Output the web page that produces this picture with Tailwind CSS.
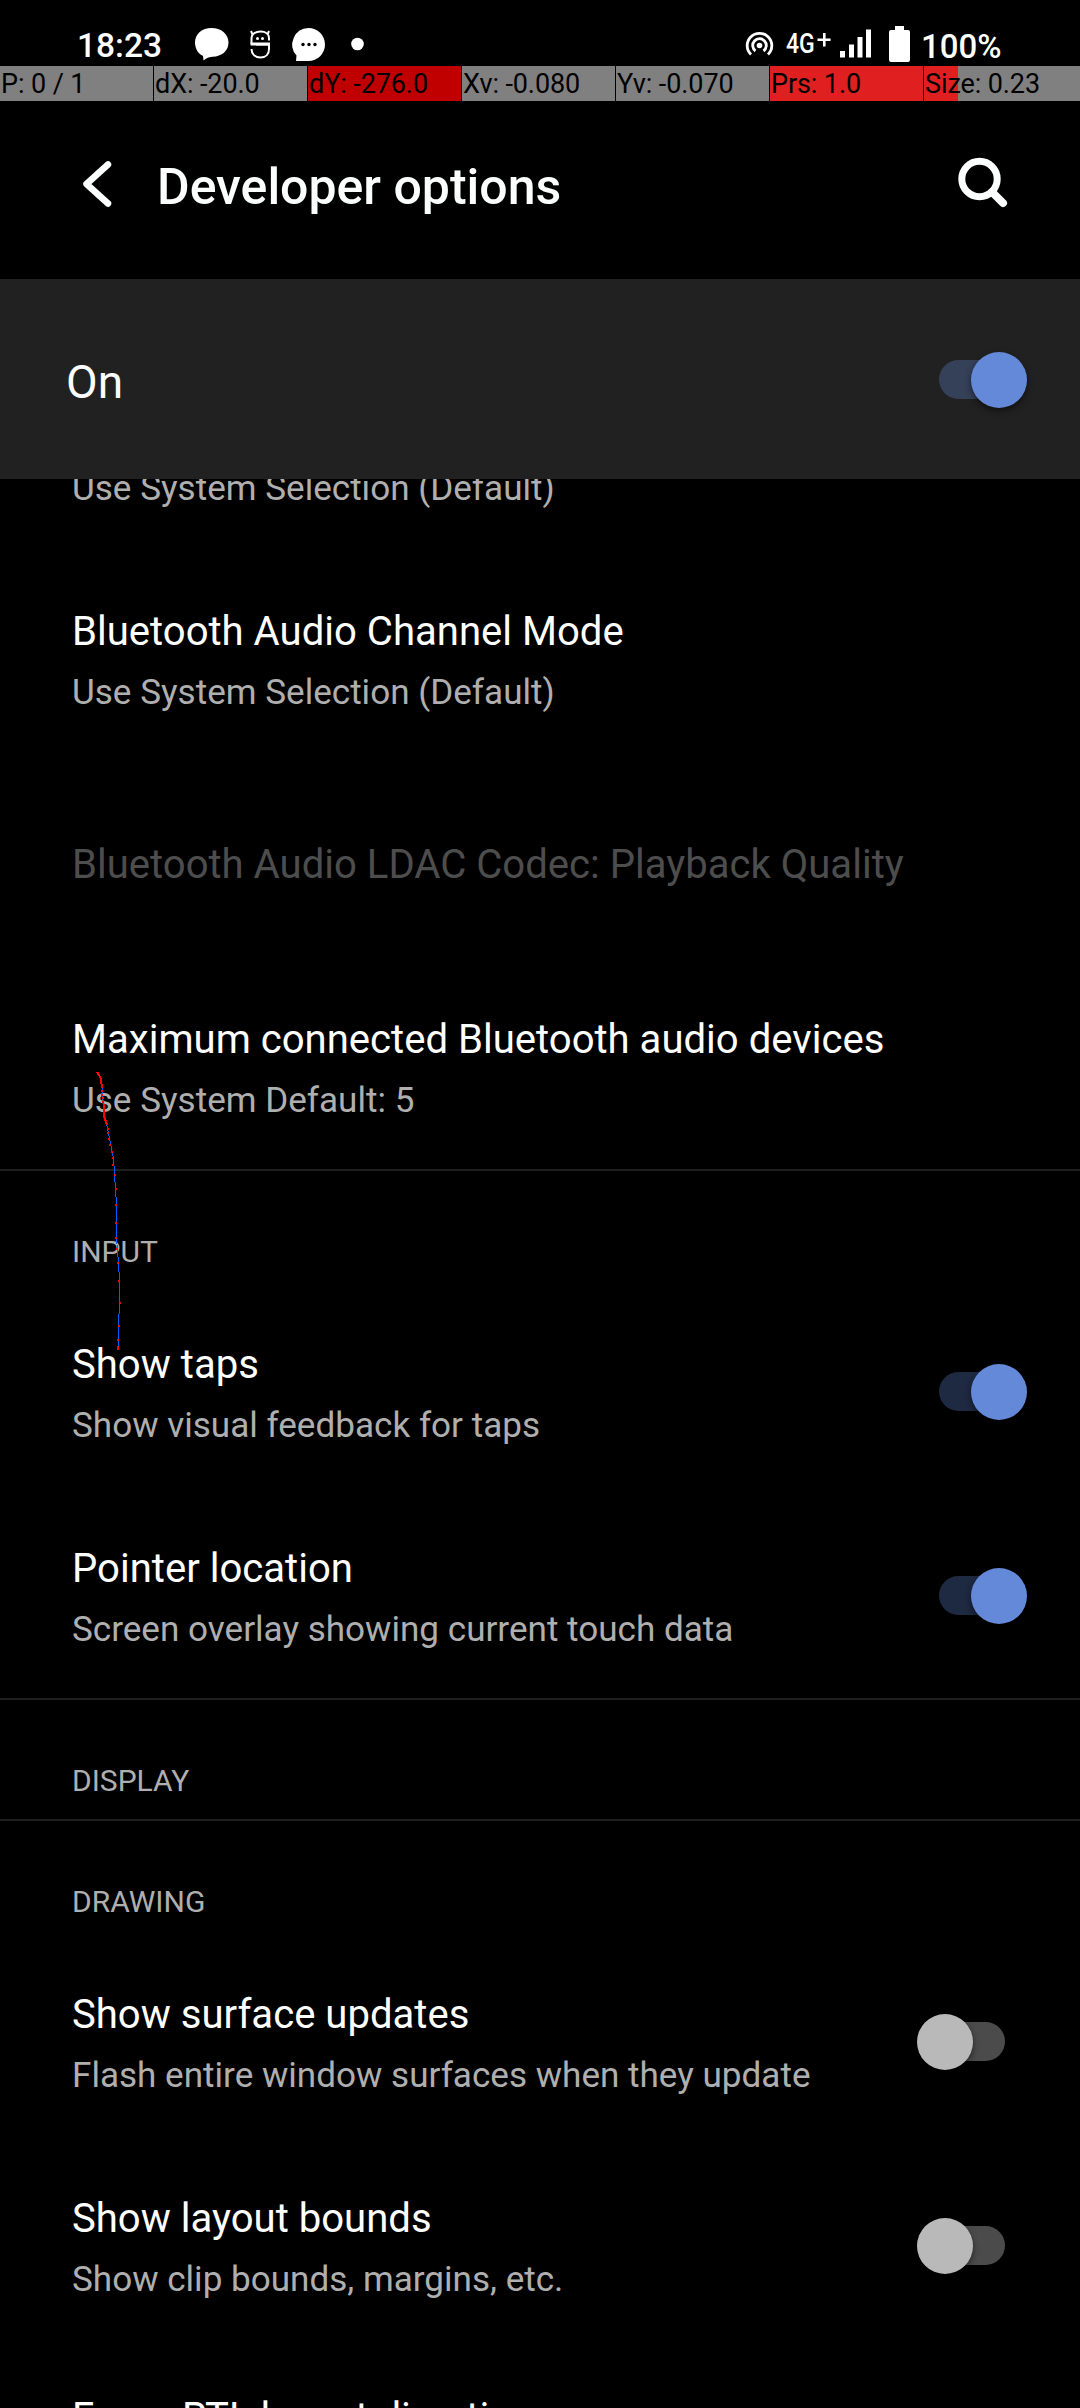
<!DOCTYPE html>
<html lang="en">
<head>
<meta charset="utf-8">
<title>Developer options</title>
<script src="https://cdn.jsdelivr.net/npm/@tailwindcss/browser@4"></script>
</head>
<body class="bg-black text-white font-[Roboto,sans-serif]">
<div class="relative w-[1080px] h-[2408px] overflow-hidden flex flex-col">
  <header class="h-[66px] shrink-0 flex">
    <span class="ml-[77px] mt-[26px] w-[113px] text-[33.500px] leading-[40px] font-medium whitespace-nowrap">18:23</span>
    <svg class="w-[190px] h-[66px]" viewBox="190 0 190 66" fill="#fff">
      <path d="M211.500 28c-9.500 0-16.500 6-16.500 14.500 0 6.500 3.500 11.500 8 13.500l.5 4.500c3-2 4.500-3.500 9-3.700 9.500-.3 16-6 16-14.300C228.500 34 221 28 211.500 28z"/>
      <g fill="none" stroke="#fff" stroke-width="2">
        <path d="M269 40.500v-2.500c0-4-3.500-6.500-8.500-6.500s-9 2.500-9 6.500v6M252.500 34.500l-1.500-3.500M267.500 34.500l1.500-3.500M251.500 49c0 5 3.500 8.500 9 8.500s8.500-3.500 8.500-8.500v-4.500h-13"/>
        <path stroke-width="3" d="M250.500 44h19.500"/>
      </g>
      <circle cx="257.500" cy="38.500" r="1.500"/><circle cx="262.500" cy="38.500" r="1.500"/>
      <path d="M308.500 28a16.500 16.500 0 0 1 0 33h-12.500l.5-5.500A16.500 16.500 0 0 1 308.500 28z"/>
      <g fill="#000"><circle cx="303" cy="44.500" r="1.700"/><circle cx="309" cy="44.500" r="1.700"/><circle cx="315" cy="44.500" r="1.700"/></g>
      <circle cx="357.500" cy="44" r="6.300"/>
    </svg>
    <svg class="ml-[359px] w-[40px] h-[66px]" viewBox="740 0 40 66" fill="none" stroke="#fff" stroke-width="2.800">
      <circle cx="760.500" cy="45.500" r="2.800" fill="#fff" stroke="none"/>
      <path d="M756.500 51a6.800 6.800 0 1 1 8 0M752 54.500a12.300 12.300 0 1 1 17 0"/>
    </svg>
    <span class="ml-[7px] mt-[25px] w-[30px] text-[28px] leading-[38px] font-medium whitespace-nowrap"><span class="inline-block origin-left scale-x-[0.82]">4G</span></span>
    <svg class="w-[100px] h-[66px]" viewBox="817 0 100 66" fill="#fff">
      <path d="M824 33h2.600v5.500h5v2.500h-5v5.500h-2.600v-5.500h-5.500v-2.500h5.500z"/>
      <path d="M841 51h5v6.500h-5zM850 44.500h5v13h-5zM858.500 37h5v20.500h-5zM867 29.500h5v28h-5z"/>
      <path d="M896 26h9v4h4a2 2 0 0 1 2 2v28a2 2 0 0 1-2 2h-17a2 2 0 0 1-2-2v-28a2 2 0 0 1 2-2h4z"/>
    </svg>
    <span class="ml-[5px] mt-[26px] text-[33px] leading-[41px] font-medium whitespace-nowrap">100%</span>
  </header>

  <div class="h-[35px] shrink-0 grid grid-cols-[153px_153px_153px_153px_153px_153px_156px] gap-px text-black text-[27px] tracking-[-0.1px] leading-[36px] whitespace-nowrap">
    <div class="bg-[#808080] pl-px h-[35px]">P: 0 / 1</div>
    <div class="bg-[#808080] pl-px h-[35px]">dX: -20.0</div>
    <div class="bg-[#c00000] pl-px h-[35px]">dY: -276.0</div>
    <div class="bg-[#808080] pl-px h-[35px]">Xv: -0.080</div>
    <div class="bg-[#808080] pl-px h-[35px]">Yv: -0.070</div>
    <div class="bg-[#e02020] pl-px h-[35px]">Prs: 1.0</div>
    <div class="bg-linear-to-r from-[#e02020] from-[34px] to-[#808080] to-[34px] pl-px h-[35px]">Size: 0.23</div>
  </div>

  <div class="h-[178px] shrink-0 flex">
    <svg class="ml-[78px] mt-[55px] w-[40px] h-[56px]" viewBox="78 156 40 56" fill="none" stroke="#fcfdfd" stroke-width="6.500" stroke-linecap="round" stroke-linejoin="round"><path d="M108 164.500L86.500 184L108 203.500"/></svg>
    <h1 class="ml-[39px] mt-[56px] text-[50px] leading-[60px] font-medium text-[#fcfdfd]">Developer options</h1>
    <svg class="ml-auto mr-[68px] mt-[51px] w-[60px] h-[60px]" viewBox="952 152 60 60" fill="none" stroke="#fcfdfd" stroke-width="7"><circle cx="979.500" cy="179" r="17.700"/><path stroke-width="8" stroke-linecap="round" d="M992 192L1003 203"/></svg>
  </div>

  <div class="h-[200px] shrink-0 bg-[#212121] flex items-start pl-[66px] pr-[53px]">
    <span class="mt-[73px] text-[46px] leading-[60px] text-[#fcfdfd]">On</span>
    <div class="ml-auto mt-[73px] w-[88px] h-[56px] relative"><div class="absolute left-0 top-2 w-[66px] h-[39px] rounded-full bg-[#6489d9]/30"></div><div class="absolute right-0 top-0 size-[56px] rounded-full bg-[#6489d9] shadow-[0_3px_6px_rgba(0,0,0,.5)]"></div></div>
  </div>

  <main class="flex flex-col text-[40.1px] leading-[48px] whitespace-nowrap">
    <section class="h-[692px] shrink-0 overflow-hidden border-b-2 border-[#1f1f1f] pl-[72px]">
      <p class="-mt-[12px] text-[35.1px] leading-[42px] text-[#afafaf]">Use System Selection (Default)</p>
      <h2 class="mt-[99px]">Bluetooth Audio Channel Mode</h2>
      <p class="mt-[15px] text-[35.1px] leading-[42px] text-[#afafaf]">Use System Selection (Default)</p>
      <h2 class="mt-[128px] text-[#4d4d4d]">Bluetooth Audio LDAC Codec: Playback Quality</h2>
      <h2 class="mt-[127px]">Maximum connected Bluetooth audio devices</h2>
      <p class="mt-[15px] text-[35.1px] leading-[42px] text-[#afafaf]">Use System Default: 5</p>
    </section>
    <section class="h-[529px] shrink-0 border-b-2 border-[#1f1f1f] pl-[72px] pr-[53px]">
      <h3 class="mt-[63px] text-[30px] leading-[36px] text-[#afafaf]">INPUT</h3>
      <div class="mt-[71px] h-[106px] flex">
        <div class="flex flex-col gap-[15px]"><h2>Show taps</h2><p class="text-[35.1px] leading-[42px] text-[#afafaf]">Show visual feedback for taps</p></div>
        <div class="ml-auto mt-[23px] w-[88px] h-[56px] relative"><div class="absolute left-0 top-2 w-[66px] h-[39px] rounded-full bg-[#6489d9]/30"></div><div class="absolute right-0 top-0 size-[56px] rounded-full bg-[#6489d9] shadow-[0_3px_6px_rgba(0,0,0,.5)]"></div></div>
      </div>
      <div class="mt-[98px] h-[106px] flex">
        <div class="flex flex-col gap-[15px]"><h2>Pointer location</h2><p class="text-[35.1px] leading-[42px] text-[#afafaf]">Screen overlay showing current touch data</p></div>
        <div class="ml-auto mt-[23px] w-[88px] h-[56px] relative"><div class="absolute left-0 top-2 w-[66px] h-[39px] rounded-full bg-[#6489d9]/30"></div><div class="absolute right-0 top-0 size-[56px] rounded-full bg-[#6489d9] shadow-[0_3px_6px_rgba(0,0,0,.5)]"></div></div>
      </div>
    </section>
    <section class="h-[121px] shrink-0 border-b-2 border-[#1f1f1f] pl-[72px]">
      <h3 class="mt-[63px] text-[30px] leading-[36px] text-[#afafaf]">DISPLAY</h3>
    </section>
    <section class="pl-[72px] pr-[75px]">
      <h3 class="mt-[63px] text-[30px] leading-[36px] text-[#afafaf]">DRAWING</h3>
      <div class="mt-[71px] h-[106px] flex">
        <div class="flex flex-col gap-[15px]"><h2>Show surface updates</h2><p class="text-[35.1px] leading-[42px] text-[#afafaf]">Flash entire window surfaces when they update</p></div>
        <div class="ml-auto mt-[23px] w-[88px] h-[56px] relative"><div class="absolute right-0 top-2 w-[66px] h-[39px] rounded-full bg-[#4b4b4b]"></div><div class="absolute left-0 top-0 size-[56px] rounded-full bg-[#b9b9b9] shadow-[0_3px_6px_rgba(0,0,0,.5)]"></div></div>
      </div>
      <div class="mt-[98px] h-[106px] flex">
        <div class="flex flex-col gap-[15px]"><h2>Show layout bounds</h2><p class="text-[35.1px] leading-[42px] text-[#afafaf]">Show clip bounds, margins, etc.</p></div>
        <div class="ml-auto mt-[23px] w-[88px] h-[56px] relative"><div class="absolute right-0 top-2 w-[66px] h-[39px] rounded-full bg-[#4b4b4b]"></div><div class="absolute left-0 top-0 size-[56px] rounded-full bg-[#b9b9b9] shadow-[0_3px_6px_rgba(0,0,0,.5)]"></div></div>
      </div>
      <h2 class="mt-[93px]">Force RTL layout direction</h2>
    </section>
  </main>

  <!-- touch trail -->
  <svg class="absolute left-[90px] top-[1065px] w-[40px] h-[290px]" viewBox="90 1065 40 290" fill="none" shape-rendering="crispEdges">
    <path stroke="#0060ff" d="M97.500 1072L101.500 1080L102.500 1095L104.500 1115L108.500 1133L113.500 1158L115.500 1189L116.500 1205V1238L118.500 1263L119.500 1281V1303L118.500 1326V1348"/>
    <path stroke="#f00" stroke-width="2" d="M97 1072L99 1075L101 1079L102 1088M104 1104V1116L107 1125"/>
    <path stroke="#f00" stroke-width="2" d="M101 1091h2M101 1095h2M102 1098h2M102 1102h2M107 1129h2M107 1133h2M108 1139h2M109 1145h2M111 1152h2M112 1158h2M112 1165h2M114 1175h2M115 1189h2M115 1205h2M115 1223h2M115 1238h2M116 1249h2M117 1263h2M118 1281h2M119 1303h2M118 1326h2M117 1340h2M118 1346v4"/>
  </svg>
</div>
</body>
</html>
